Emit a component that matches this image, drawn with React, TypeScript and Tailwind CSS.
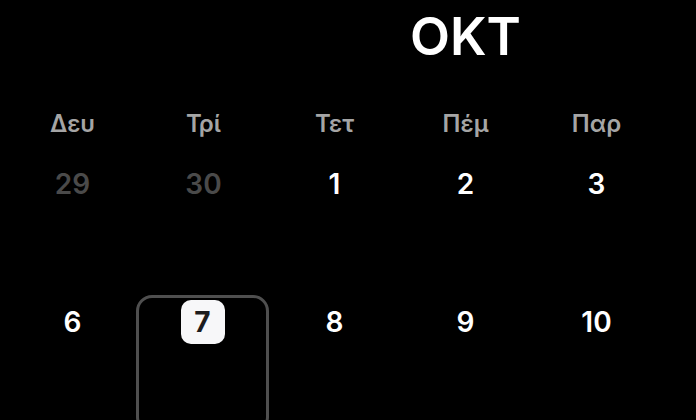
import React from "react";

// only the weekdays fit in the visible window; the weekend columns stay empty
const days = ["Δευ", "Τρί", "Τετ", "Πέμ", "Παρ"];

type Day = { n: number; muted?: boolean; today?: boolean };

const weeks: Day[][] = [
  [{ n: 29, muted: true }, { n: 30, muted: true }, { n: 1 }, { n: 2 }, { n: 3 }],
  [{ n: 6 }, { n: 7, today: true }, { n: 8 }, { n: 9 }, { n: 10 }],
];

const Cell = ({ day }: { day: Day }) => (
  <div
    className={`h-[138px] flex flex-col items-center pt-[2px] rounded-[16px] border-[3px] ${
      day.today ? "border-[#4f4f4f] -ml-[2px]" : "border-transparent"
    }`}
  >
    <div
      className={`w-11 h-11 flex items-center justify-center rounded-[10px] text-[28px] leading-none ${
        day.today
          ? "bg-[#f7f7f9] text-[#1c1c1e] font-bold"
          : day.muted
          ? "text-[#4a4a4a] font-semibold"
          : "text-white font-semibold"
      }`}
    >
      {day.n}
    </div>
  </div>
);

export default function App() {
  return (
    <main
      className="w-[696px] h-[420px] overflow-hidden bg-black"
      style={{ fontFamily: "Inter, 'Noto Sans', sans-serif" }}
    >
      <div className="w-[917px] ml-[7px]">
        <h1 className="pt-[11px] text-center text-[52px] leading-none font-semibold text-white">
          ΟΚΤ
        </h1>

        <div className="grid grid-cols-7 mt-[49px]">
          {days.map((d) => (
            <div key={d} className="h-6 text-center text-[24px] leading-none font-semibold text-[#a5a5a5]">
              {d}
            </div>
          ))}
        </div>

        <div className="mt-[21px] flex flex-col">
          {weeks.map((w, i) => (
            <div key={i} className="grid grid-cols-7">
              {w.map((day) => (
                <Cell key={day.n} day={day} />
              ))}
            </div>
          ))}
        </div>
      </div>
    </main>
  );
}
